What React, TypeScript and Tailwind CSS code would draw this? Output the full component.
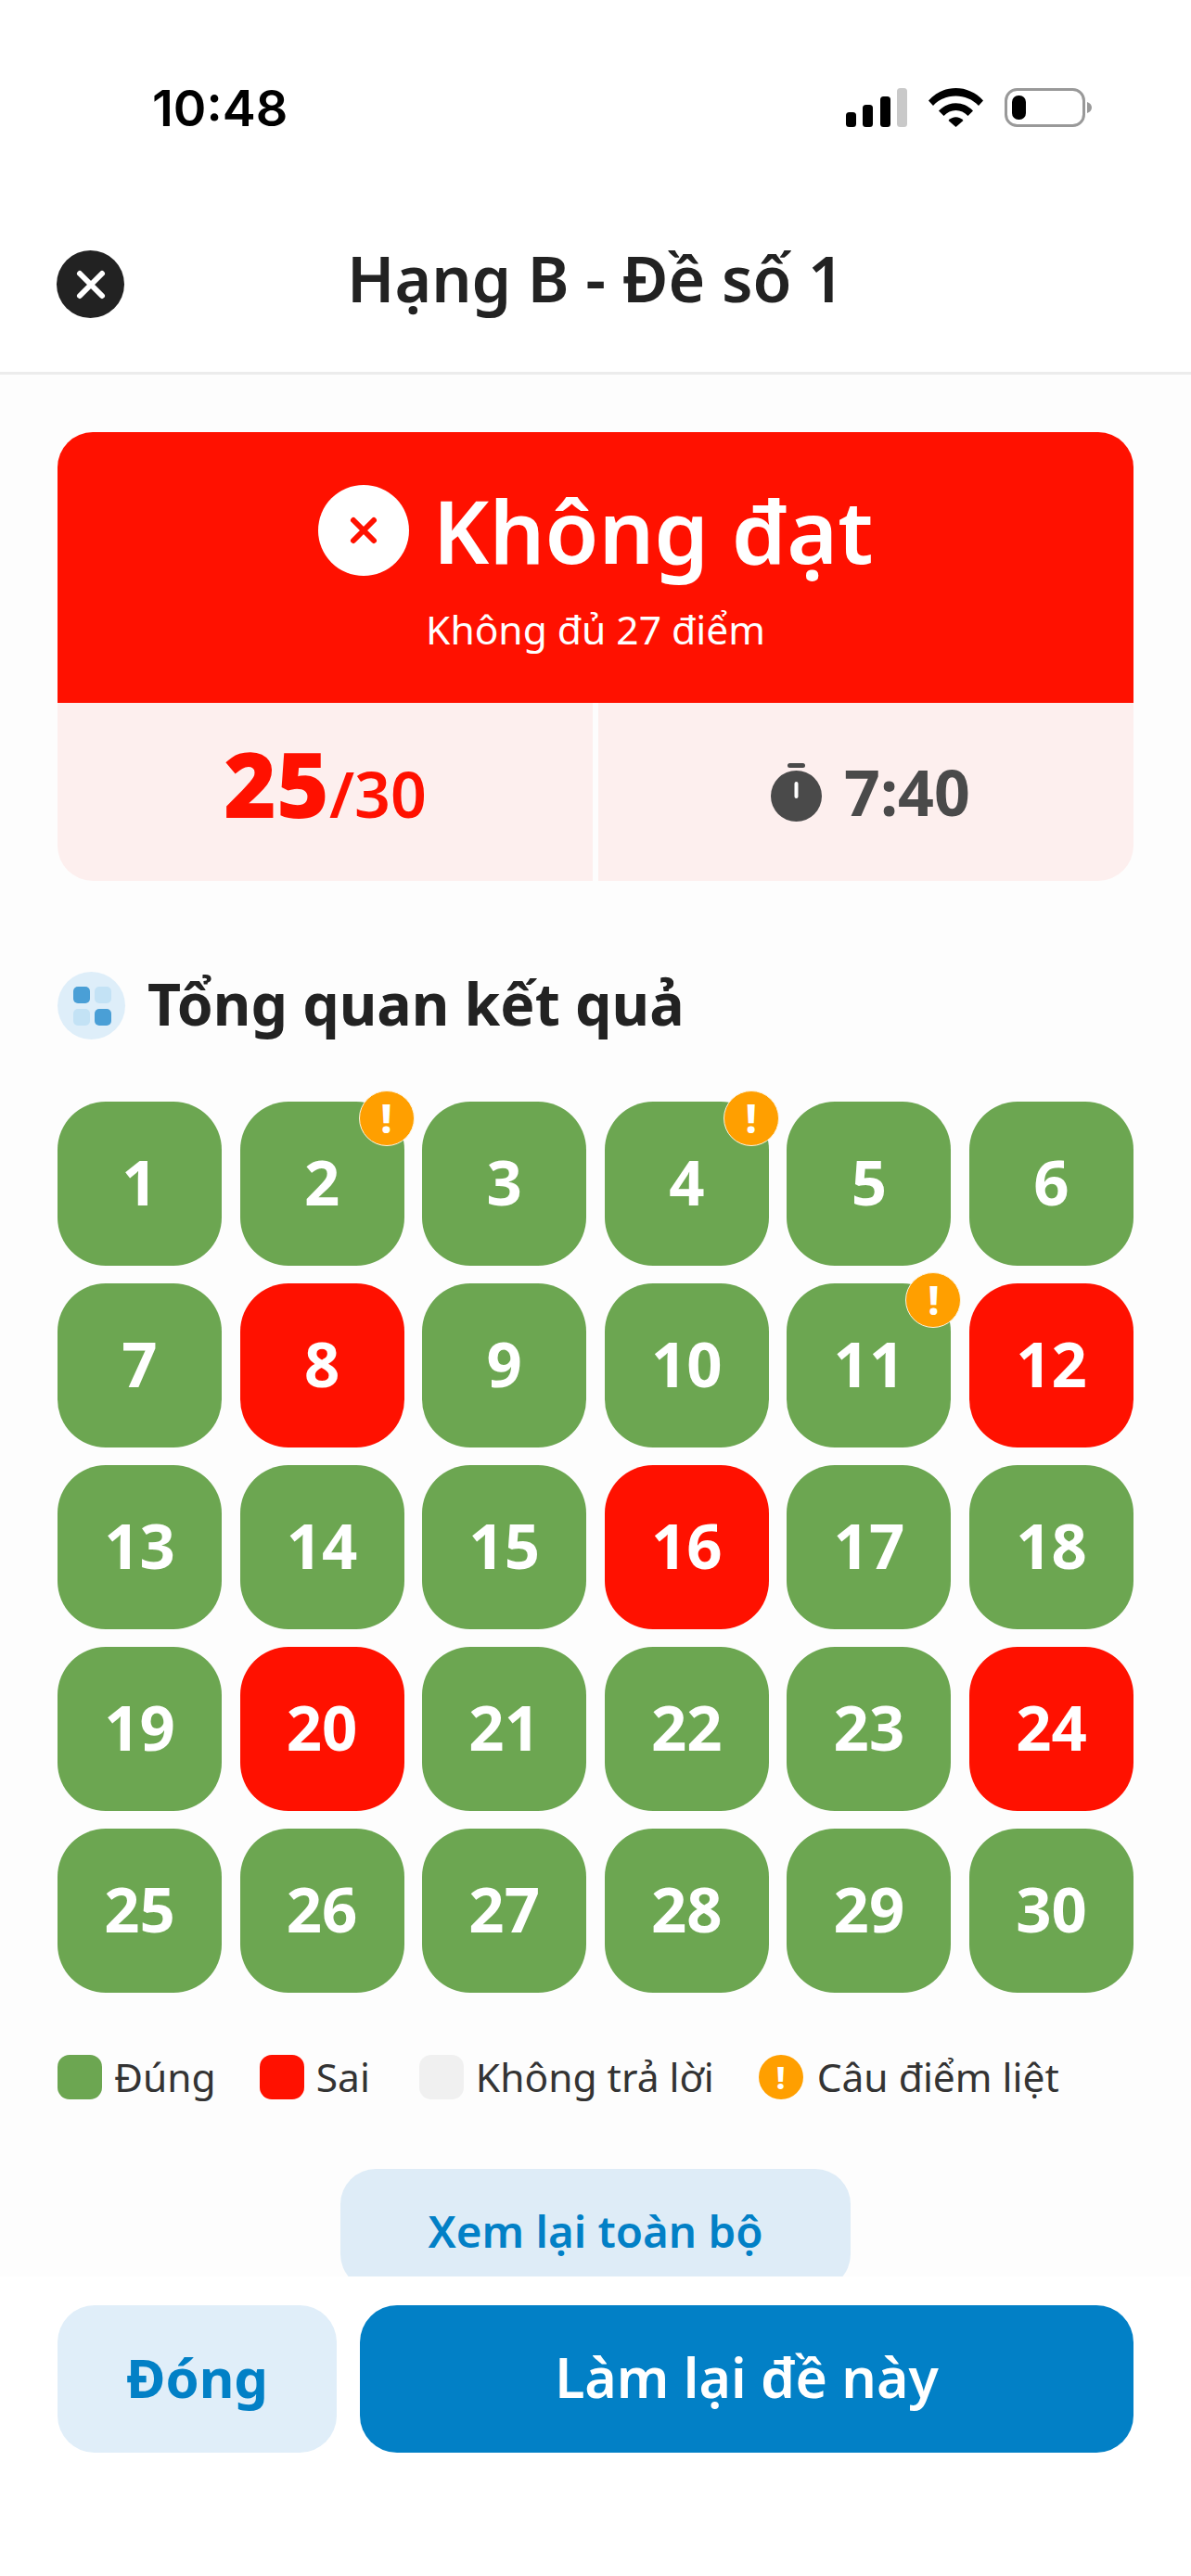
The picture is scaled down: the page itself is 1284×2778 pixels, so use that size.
const wrong = [8, 12, 16, 20, 24]
const flagged = [2, 4, 11]
const numbers = Array.from({ length: 30 }, (_, i) => i + 1)

function StatusIcons() {
  return (
    <div className="flex items-center">
      <svg width="66" height="42" viewBox="0 0 66 42">
        <rect x="0" y="26" width="11" height="16" rx="3.5" fill="#000" />
        <rect x="18" y="18" width="11" height="24" rx="3.5" fill="#000" />
        <rect x="37" y="9" width="11" height="33" rx="3.5" fill="#000" />
        <rect x="55" y="0" width="11" height="42" rx="3.5" fill="#c9c9c9" />
      </svg>
      <svg className="ml-[23px]" width="59" height="42" viewBox="0 0 59 42">
        <path d="M0 13.5C16-4.5 43-4.5 59 13.5L54 19C41 5 18 5 5 19Z" fill="#000" />
        <path d="M11 24.500C21 13.500 38 13.500 48 24.500L42.500 30C35.500 22 23.500 22 16.500 30Z" fill="#000" />
        <path d="M21.500 35C26 30 33 30 37.500 35L29.500 42Z" fill="#000" />
      </svg>
      <svg className="ml-[23px]" width="94" height="42" viewBox="0 0 94 42">
        <rect x="1.500" y="1.500" width="84" height="39" rx="12" fill="none" stroke="#999" strokeWidth="3" />
        <rect x="8" y="8" width="15" height="26" rx="7" fill="#000" />
        <path d="M89 15C92 16 94 18 94 21C94 24 92 26 89 27Z" fill="#999" />
      </svg>
    </div>
  )
}

function Tile({ n }: { n: number }) {
  return (
    <div
      className={`relative flex h-[177px] items-center justify-center rounded-[52px] pb-[4px] text-[67px] font-bold text-white ${
        wrong.includes(n) ? "bg-[#ff1100]" : "bg-[#6ca651]"
      }`}
    >
      {n}
      {flagged.includes(n) && (
        <span className="absolute right-[-11px] top-[-12px] flex h-[60px] w-[60px] items-center justify-center rounded-full border border-[#fdf3dc] bg-[#ff9f00] text-[42px] font-extrabold leading-none">
          !
        </span>
      )}
    </div>
  )
}

function LegendItem({ color, label }: { color: string; label: string }) {
  return (
    <div className="flex items-center gap-[13px]">
      <span className={`h-[48px] w-[48px] rounded-[13px] ${color}`} />
      <span className="text-[42.5px] text-[#333]">{label}</span>
    </div>
  )
}

export default function App() {
  return (
    <div
      className="flex h-[2778px] w-[1284px] flex-col overflow-hidden bg-white text-[#222]"
      style={{ fontFamily: '"Noto Sans", sans-serif' }}
    >
      <div className="flex h-[190px] items-start justify-between pl-[164px] pr-[107px] pt-[95px]">
        <span className="text-[54px] font-semibold leading-[44px] text-black" style={{ fontFamily: "Inter, sans-serif" }}>
          10:48
        </span>
        <StatusIcons />
      </div>

      <header className="relative flex h-[214px] items-center justify-center border-b-[3px] border-[#ececec] pt-[8px]">
        <span className="absolute left-[61px] top-[80px] flex h-[73px] w-[73px] items-center justify-center rounded-full bg-[#222]">
          <svg width="34" height="34" viewBox="0 0 34 34">
            <path d="M5 5L29 29M29 5L5 29" stroke="#fff" strokeWidth="6" strokeLinecap="round" />
          </svg>
        </span>
        <h1 className="text-[68px] font-semibold leading-none">Hạng B - Đề số 1</h1>
      </header>

      <main className="flex-1 overflow-hidden bg-[#fdfdfd] px-[62px] pt-[62px]">
        <section className="overflow-hidden rounded-[38px]">
          <div className="flex h-[292px] flex-col items-center bg-[#ff1100] pt-[56px] text-white">
            <div className="flex items-center gap-[26px]">
              <span className="flex h-[98px] w-[98px] items-center justify-center rounded-full bg-white">
                <svg width="34" height="34" viewBox="0 0 34 34">
                  <path d="M6 6L28 28M28 6L6 28" stroke="#ff1100" strokeWidth="6" strokeLinecap="round" />
                </svg>
              </span>
              <span className="text-[94px] font-semibold leading-[100px]">Không đạt</span>
            </div>
            <p className="mt-[32px] text-[42.5px] leading-[50px]">Không đủ 27 điểm</p>
          </div>
          <div className="flex h-[192px] gap-[6px]">
            <div className="flex w-[577px] shrink-0 items-baseline justify-center bg-[#fdefee] pt-[26px] text-[#ff1100]">
              <span className="text-[97px] font-black leading-[120px]">25</span>
              <span className="text-[68px] font-semibold">/30</span>
            </div>
            <div className="flex w-[577px] shrink-0 items-center justify-center gap-[24px] bg-[#fdefee] pl-[10px] text-[#4a4a4a]">
              <svg width="55" height="63" viewBox="0 0 55 63">
                <rect x="18" y="0" width="19" height="5" rx="2.500" fill="#4a4a4a" />
                <circle cx="27.500" cy="35.500" r="27.500" fill="#4a4a4a" />
                <rect x="25.500" y="20" width="4" height="18" rx="2" fill="#fff" />
              </svg>
              <span className="text-[68px] font-bold leading-none">7:40</span>
            </div>
          </div>
        </section>

        <div className="mt-[98px] flex items-center gap-[24px]">
          <span className="grid h-[73px] w-[73px] grid-cols-2 content-center justify-center gap-[6px] rounded-full bg-[#deeef9] px-[17px]">
            <i className="h-[18px] w-[18px] rounded-[5px] bg-[#4a9fd6]" />
            <i className="h-[18px] w-[18px] rounded-[5px] bg-[#c3e2f5]" />
            <i className="h-[18px] w-[18px] rounded-[5px] bg-[#c3e2f5]" />
            <i className="h-[18px] w-[18px] rounded-[5px] bg-[#4a9fd6]" />
          </span>
          <h2 className="pb-[5px] text-[62.5px] font-bold leading-none">Tổng quan kết quả</h2>
        </div>

        <div className="mt-[67px] grid grid-cols-6 gap-x-[19.600px] gap-y-[19px]">
          {numbers.map((n) => (
            <Tile key={n} n={n} />
          ))}
        </div>

        <div className="mt-[62px] flex h-[58px] items-center">
          <LegendItem color="bg-[#6ca651]" label="Đúng" />
          <div className="ml-[47px]">
            <LegendItem color="bg-[#ff1100]" label="Sai" />
          </div>
          <div className="ml-[53px]">
            <LegendItem color="bg-[#f0f0f0]" label="Không trả lời" />
          </div>
          <div className="ml-[48px] flex items-center gap-[15px]">
            <span className="flex h-[48px] w-[48px] items-center justify-center rounded-full bg-[#ff9f00] text-[34px] font-extrabold leading-none text-white">
              !
            </span>
            <span className="text-[42.5px] text-[#333]">Câu điểm liệt</span>
          </div>
        </div>

        <button className="mx-auto mt-[70px] block h-[130px] w-[550px] rounded-[38px] bg-[#deecf7] pt-[4px] text-[47.5px] font-semibold text-[#0280c6]">
          Xem lại toàn bộ
        </button>
      </main>

      <footer className="flex h-[323px] gap-[25px] bg-white px-[62px] pt-[31px]">
        <button className="h-[159px] w-[301px] rounded-[40px] bg-[#e0eef9] pb-[4px] text-[58px] font-bold text-[#0280c6]">
          Đóng
        </button>
        <button className="h-[159px] flex-1 rounded-[40px] bg-[#0280c6] pb-[4px] text-[59px] font-semibold text-white">
          Làm lại đề này
        </button>
      </footer>
    </div>
  )
}
